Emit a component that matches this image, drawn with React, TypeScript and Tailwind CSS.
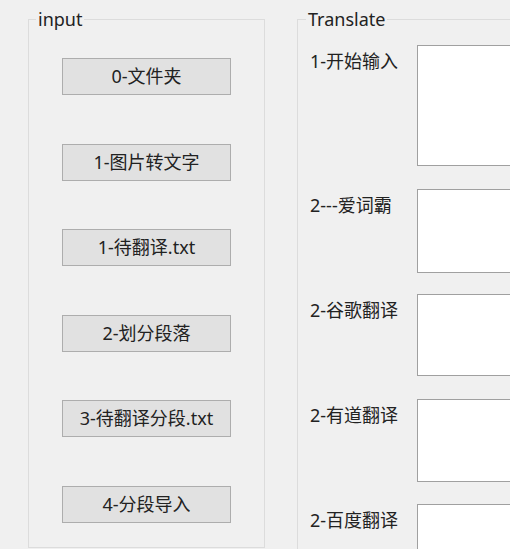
import React from 'react';

const buttons = ['0-文件夹', '1-图片转文字', '1-待翻译.txt', '2-划分段落', '3-待翻译分段.txt', '4-分段导入'];

// each row: label, box height, top margin
const rows = [
  { label: '1-开始输入', box: 'h-[121px]', top: 'mt-0' },
  { label: '2---爱词霸', box: 'h-[84px]', top: 'mt-[23px]' },
  { label: '2-谷歌翻译', box: 'h-[82px]', top: 'mt-[21px]' },
  { label: '2-有道翻译', box: 'h-[83px]', top: 'mt-[23px]' },
  { label: '2-百度翻译', box: 'h-[83px]', top: 'mt-[22px]' },
];

function GroupTitle({ text, left }: { text: string; left: string }) {
  return (
    <span className={`absolute -top-[12px] ${left} bg-[#f0f0f0] px-[2px] text-[18px] leading-[22px] text-[#222]`}>
      {text}
    </span>
  );
}

export default function App() {
  return (
    <div
      className="relative flex h-[549px] w-[510px] items-start overflow-hidden bg-[#f0f0f0] pt-[19px]"
      style={{ fontFamily: '"Noto Sans", "Noto Sans CJK SC", sans-serif' }}
    >
      {/* input group */}
      <div className="relative ml-[28px] h-[529px] w-[237px] shrink-0 border border-[#dcdcdc] pl-[33px] pt-[38px]">
        <GroupTitle text="input" left="left-[7px]" />
        <div className="flex flex-col gap-[48.6px]">
          {buttons.map((b) => (
            <button
              key={b}
              className="flex h-[37px] w-[169px] items-center justify-center border border-[#adadad] bg-[#e1e1e1] text-[18px] text-[#222]"
            >
              {b}
            </button>
          ))}
        </div>
      </div>

      {/* Translate group */}
      <div className="relative ml-[32px] h-[560px] w-[260px] shrink-0 border border-[#dcdcdc] pl-[12px] pt-[25px]">
        <GroupTitle text="Translate" left="left-[8px]" />
        <div className="flex flex-col">
          {rows.map((r) => (
            <div key={r.label} className={`flex items-start ${r.top}`}>
              <div className="mt-[5px] w-[107px] shrink-0 text-[18px] leading-[22px] text-[#222]">{r.label}</div>
              <div className={`${r.box} w-[140px] shrink-0 border border-[#a0a0a0] bg-white`} />
            </div>
          ))}
        </div>
      </div>
    </div>
  );
}
